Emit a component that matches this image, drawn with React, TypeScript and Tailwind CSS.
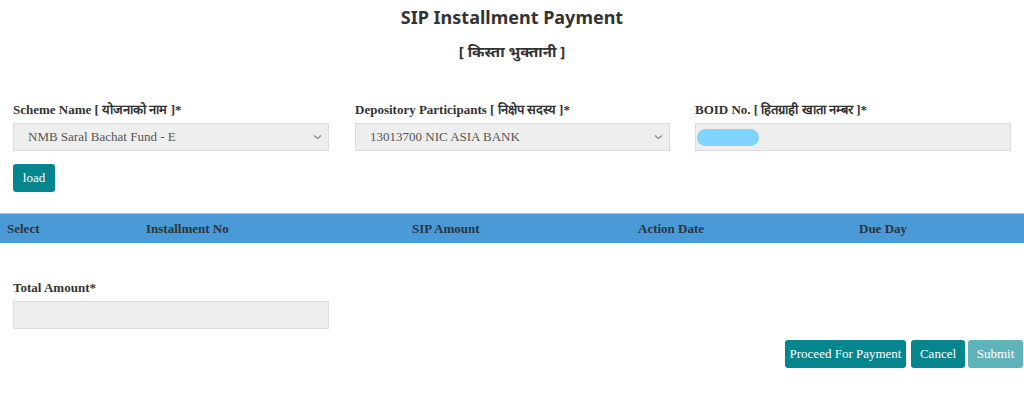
import React from "react";

const serif = { fontFamily: '"Liberation Serif", "Times New Roman", serif' };

function Chevron() {
  return (
    <svg width="9" height="6" viewBox="0 0 9 6" className="shrink-0">
      <path d="M1 1.5l3.5 3 3.5-3" fill="none" stroke="#888" strokeWidth="1.1" />
    </svg>
  );
}

function SelectBox({ value }: { value: string }) {
  return (
    <div className="flex h-[28px] w-full items-center justify-between border border-[#dcdcdc] bg-[#eeeeee] pl-[14px] pr-[6px] text-[13px] text-[#555]">
      <span>{value}</span>
      <Chevron />
    </div>
  );
}

function Field({ label, className, children }: { label: string; className: string; children: React.ReactNode }) {
  return (
    <div className={`flex flex-col ${className}`}>
      <label className="mb-[5px] text-[13px] font-bold leading-[16px] text-[#333]">{label}</label>
      {children}
    </div>
  );
}

const columns = [
  { name: "Select", w: "w-[139px]" },
  { name: "Installment No", w: "w-[266px]" },
  { name: "SIP Amount", w: "w-[226px]" },
  { name: "Action Date", w: "w-[221px]" },
  { name: "Due Day", w: "w-[172px]" },
];

export default function App() {
  return (
    <div className="h-[408px] w-[1024px] bg-white" style={serif}>
      <div className="flex flex-col items-center pt-[5px] text-[#333]" style={{ fontFamily: '"Noto Sans", "Open Sans", sans-serif' }}>
        <h1 className="text-[18px] font-bold leading-[24px]">SIP Installment Payment</h1>
        <h2 className="mt-[12px] text-[15px] font-bold leading-[20px]">[ किस्ता भुक्तानी ]</h2>
      </div>

      <div className="mt-[41px] flex gap-[25px] px-[13px]">
        <Field label="Scheme Name [ योजनाको नाम ]*" className="mr-[1px] w-[316px]">
          <SelectBox value="NMB Saral Bachat Fund - E" />
        </Field>
        <Field label="Depository Participants [ निक्षेप सदस्य ]*" className="w-[315px]">
          <SelectBox value="13013700 NIC ASIA BANK" />
        </Field>
        <Field label="BOID No. [ हितग्राही खाता नम्बर ]*" className="w-[316px]">
          <div className="flex h-[28px] items-center border border-[#dcdcdc] bg-[#eeeeee] pl-[1px]">
            <div className="h-[17px] w-[62px] rounded-full bg-[#80d4ff]" />
          </div>
        </Field>
      </div>

      <div className="mt-[13px] px-[13px]">
        <button className="h-[28px] w-[42px] rounded-[3px] bg-[#05868f] text-[13px] text-white">load</button>
      </div>

      <div className="mt-[21px] flex h-[30px] items-center border-t border-[#9ec9ec] bg-[#4a9ad7] text-[13px] font-bold text-[#2c3440]">
        {columns.map((c) => (
          <div key={c.name} className={`${c.w} px-[7px]`}>
            {c.name}
          </div>
        ))}
      </div>

      <div className="mt-[37px] px-[13px]">
        <Field label="Total Amount*" className="w-[316px]">
          <div className="h-[28px] border border-[#dcdcdc] bg-[#eeeeee]" />
        </Field>
      </div>

      <div className="mt-[11px] flex justify-end gap-[5px] pr-[1px] text-[13px] text-white">
        <button className="h-[28px] w-[121px] rounded-[3px] bg-[#05868f]">Proceed For Payment</button>
        <button className="mr-[-2px] h-[28px] w-[54px] rounded-[3px] bg-[#05868f]">Cancel</button>
        <button className="h-[28px] w-[55px] rounded-[3px] bg-[#5fb4bb]">Submit</button>
      </div>
    </div>
  );
}
